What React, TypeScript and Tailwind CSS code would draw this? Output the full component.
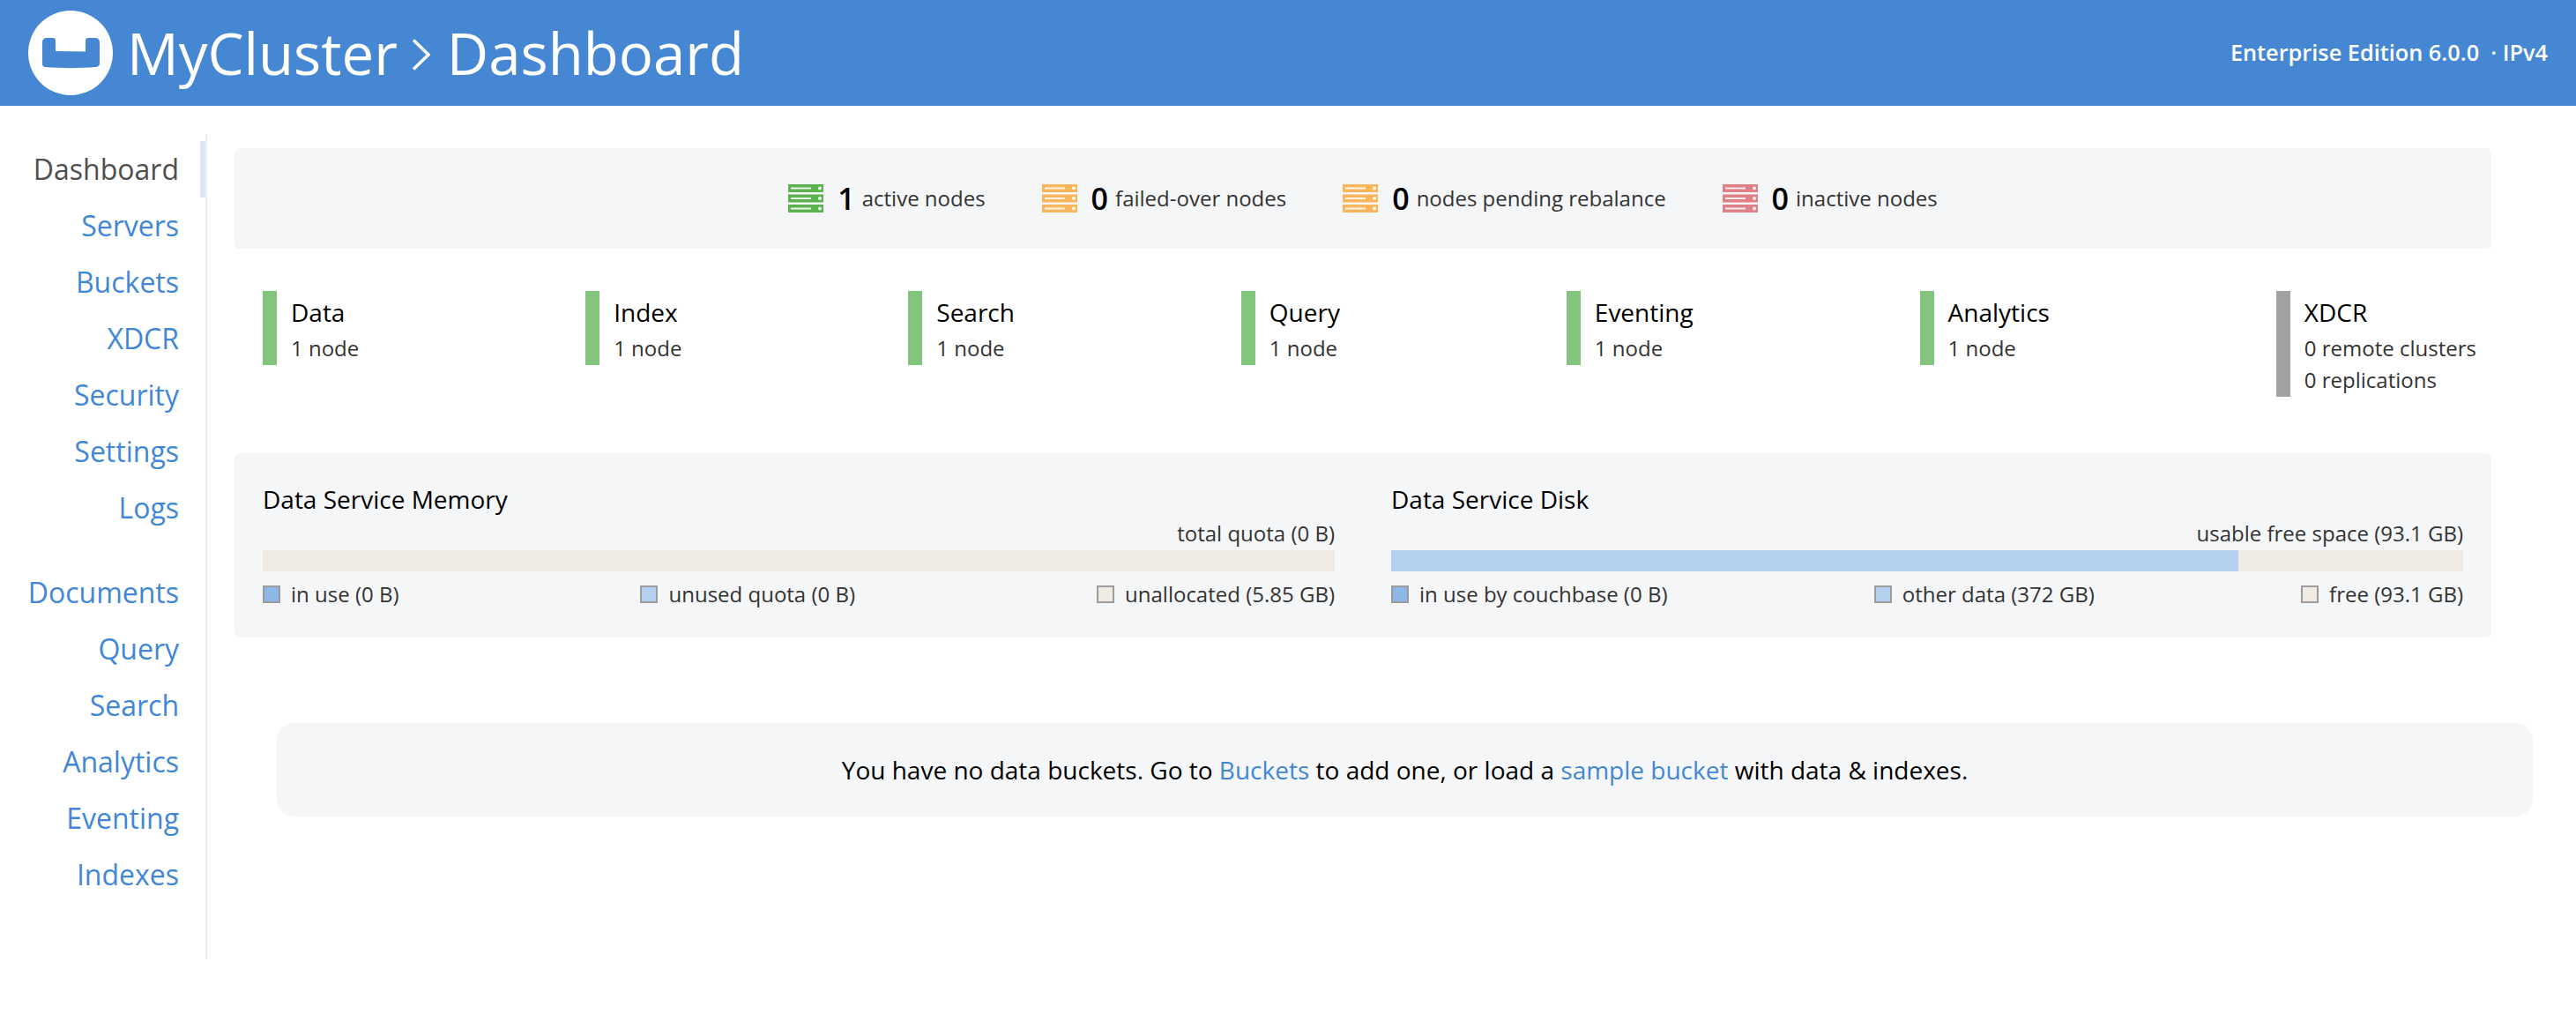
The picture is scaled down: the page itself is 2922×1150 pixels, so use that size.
const font = "font-['Open_Sans',sans-serif]";

const mainNav = ["Servers", "Buckets", "XDCR", "Security", "Settings", "Logs"];
const dataNav = ["Documents", "Query", "Search", "Analytics", "Eventing", "Indexes"];

const nodeStats = [
  { count: 1, label: "active nodes", color: "#5cb24f" },
  { count: 0, label: "failed-over nodes", color: "#fbb65c" },
  { count: 0, label: "nodes pending rebalance", color: "#fbb65c" },
  { count: 0, label: "inactive nodes", color: "#e17f86" },
];

const services = [
  { name: "Data", lines: ["1 node"] },
  { name: "Index", lines: ["1 node"] },
  { name: "Search", lines: ["1 node"] },
  { name: "Query", lines: ["1 node"] },
  { name: "Eventing", lines: ["1 node"] },
  { name: "Analytics", lines: ["1 node"] },
  { name: "XDCR", lines: ["0 remote clusters", "0 replications"], off: true },
];

function Logo() {
  return (
    <svg width="96" height="96" viewBox="0 0 96 96" className="shrink-0">
      <circle cx="48" cy="48" r="48" fill="#fff" />
      <path
        d="M16 36c0-3 2-5 5-5h7c2 0 3 1.500 3 4v11l34 .5V35c0-2.500 1-4 3-4h8c3 0 5 2 5 5v24c0 2.500-1.500 3.500-4 4-20 1.500-38 1.500-58 0-2.500-.5-3-1.500-3-4z"
        fill="#4687d3"
      />
    </svg>
  );
}

function ServerIcon({ color }: { color: string }) {
  return (
    <svg width="40" height="32" viewBox="0 0 40 32" className="shrink-0">
      {[0, 11.500, 23].map((y) => (
        <g key={y}>
          <rect x="0" y={y} width="40" height="9" fill={color} />
          <rect x="3" y={y + 3.500} width="23" height="2" fill="#fff" opacity=".85" />
          <circle cx="36" cy={y + 4.500} r="2" fill="#fff" opacity=".9" />
        </g>
      ))}
    </svg>
  );
}

function Legend({ color, label }: { color: string; label: string }) {
  return (
    <div className="flex items-center gap-3 text-[24px] leading-[40px] text-[#333]">
      <span className="size-5 border-2 border-[#9c9c9c]" style={{ background: color }} />
      {label}
    </div>
  );
}

function Meter({
  title,
  caption,
  fill,
  legend,
}: {
  title: string;
  caption: string;
  fill?: string;
  legend: { color: string; label: string }[];
}) {
  return (
    <div className="flex-1">
      <h2 className="text-[28px] leading-[40px] font-normal text-black">{title}</h2>
      <p className="text-right text-[24px] leading-[34px] mt-[2px] mb-[2px] text-[#333]">{caption}</p>
      <div className="h-6 bg-[#efebe2]">
        {fill && <div className="h-full bg-[#b5cfef]" style={{ width: fill }} />}
      </div>
      <div className="flex justify-between mt-[6px]">
        {legend.map((item) => (
          <Legend key={item.label} {...item} />
        ))}
      </div>
    </div>
  );
}

export default function App() {
  return (
    <div className={`${font} min-h-[1150px] bg-white`}>
      <header className="h-[120px] bg-[#4687d3] flex items-center justify-between pl-8 pr-8 text-white">
        <div className="flex items-center gap-4">
          <Logo />
          <h1 className="text-[65.300px] leading-none font-normal flex items-center">
            MyCluster
            <svg width="22" height="36" viewBox="0 0 22 36" className="ml-[16px] mr-[18px] mt-1">
              <path d="M2 1.500l17 16.500L2 34.500" fill="none" stroke="#fff" strokeWidth="3.500" />
            </svg>
            Dashboard
          </h1>
        </div>
        <div className="text-[25.300px] font-semibold">Enterprise Edition 6.0.0 &nbsp;· IPv4</div>
      </header>

      <div className="flex pt-8">
        <nav className="w-[235px] h-[936px] shrink-0 border-r-2 border-[#ebedf0] text-[32px] text-right text-[#4287d6]">
          <div className="flex flex-col mt-2">
            <div className="relative h-16 leading-[64px] pr-[30px] text-[#4f4f4f]">
              Dashboard
              <span className="absolute right-0 top-0 h-16 w-[6px] bg-[#dde6f3]" />
            </div>
            {mainNav.map((item) => (
              <div key={item} className="h-16 leading-[64px] pr-[30px]">
                {item}
              </div>
            ))}
            <div className="h-8" />
            {dataNav.map((item) => (
              <div key={item} className="h-16 leading-[64px] pr-[30px]">
                {item}
              </div>
            ))}
          </div>
        </nav>

        <main className="flex-1 pl-[31px] pt-4 pr-[49px]">
          <div className="w-[2560px]">
            <section className="h-[114px] bg-[#f5f6f8] rounded-md flex items-center justify-center gap-16">
              {nodeStats.map((stat) => (
                <div key={stat.label} className="flex items-center">
                  <ServerIcon color={stat.color} />
                  <span className="ml-[16px] mr-[8px] text-[34px] font-semibold text-black">{stat.count}</span>
                  <span className="text-[24px] text-[#333]">{stat.label}</span>
                </div>
              ))}
            </section>

            <section className="flex items-start justify-between pl-8 pr-[17px] mt-12">
              {services.map((s) => (
                <div key={s.name} className="flex self-start">
                  <span className={`w-4 mr-4 ${s.off ? "bg-[#a1a1a1]" : "bg-[#83c57c]"}`} />
                  <div className="py-px">
                    <div className="text-[28px] leading-[46px] text-black">{s.name}</div>
                    {s.lines.map((line) => (
                      <div key={line} className="text-[24px] leading-[36px] text-[#333]">
                        {line}
                      </div>
                    ))}
                  </div>
                </div>
              ))}
            </section>

            <section className="h-[209px] mt-16 bg-[#f5f6f8] rounded-md flex gap-16 px-8 pt-8">
              <Meter
                title="Data Service Memory"
                caption="total quota (0 B)"
                legend={[
                  { color: "#8db8e6", label: "in use (0 B)" },
                  { color: "#b5cfef", label: "unused quota (0 B)" },
                  { color: "#efebe2", label: "unallocated (5.85 GB)" },
                ]}
              />
              <Meter
                title="Data Service Disk"
                caption="usable free space (93.1 GB)"
                fill="79%"
                legend={[
                  { color: "#8db8e6", label: "in use by couchbase (0 B)" },
                  { color: "#b5cfef", label: "other data (372 GB)" },
                  { color: "#efebe2", label: "free (93.1 GB)" },
                ]}
              />
            </section>
          </div>

          <div className="ml-12 mt-[97px] h-[106px] bg-[#f5f6f8] rounded-[20px] flex items-center justify-center text-[28px] text-black">
            <p>
              You have no data buckets. Go to <a className="text-[#4287d6]">Buckets</a> to add one, or load a{" "}
              <a className="text-[#4287d6]">sample bucket</a> with data &amp; indexes.
            </p>
          </div>
        </main>
      </div>
    </div>
  );
}
